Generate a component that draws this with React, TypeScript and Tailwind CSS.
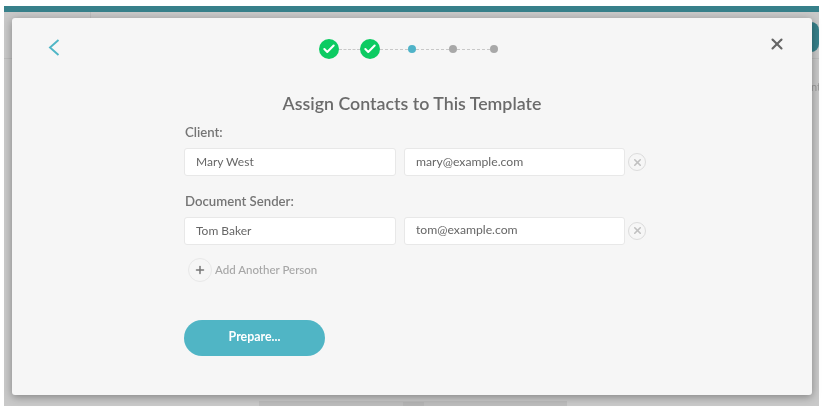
import React from 'react';
import { Check, Plus, X } from 'lucide-react';

const font = "font-['Lato','Open_Sans',sans-serif]";

const StepDone = () => (
  <div className="flex h-5 w-5 items-center justify-center rounded-full bg-[#0ccb62]">
    <Check className="h-[14px] w-[14px] text-white" strokeWidth={3.5} />
  </div>
);

const Dash: React.FC<{ w: string }> = ({ w }) => <div className={`${w} border-t border-dashed border-[#c8c8c8]`} />;

const Row: React.FC<{ label: string; name: string; email: string }> = ({ label, name, email }) => (
  <div>
    <div className="ml-px text-[13.2px] leading-4 font-semibold text-[#757575]">{label}</div>
    <div className="mt-[8px] flex items-center">
      <div className="flex h-[28px] w-[212px] items-center rounded-[3px] border border-[#e8e8e8] bg-white pl-[11px] text-[12px] text-[#666]">
        {name}
      </div>
      <div className="ml-2 flex h-[28px] w-[221px] items-center rounded-[3px] border border-[#e8e8e8] bg-white pl-[11px] text-[12.2px] text-[#666]">
        {email}
      </div>
      <div className="ml-[3px] flex h-[18px] w-[18px] items-center justify-center rounded-full border border-[#dcdcdc]">
        <X className="h-[11px] w-[11px] text-[#c0c0c0]" strokeWidth={3.5} />
      </div>
    </div>
  </div>
);

export default function App() {
  return (
    <div className={`h-[411px] w-[822px] overflow-hidden bg-white pt-1.5 pr-[3px] pb-[5px] pl-1 blur-[0.4px] ${font}`}>
      <div className="relative flex h-full flex-col bg-[#c9c9c9]">
        <div className="h-1.5 bg-[#37808a]" />
        {/* page behind the modal, only its edges show */}
        <div className="absolute top-[6px] left-[86px] h-1.5 w-px bg-[#bdbdbd]" />
        <div className="absolute top-[52px] left-0 h-px w-2 bg-[#bdbdbd]" />
        <div className="absolute top-[52px] right-0 h-px w-2 bg-[#bdbdbd]" />
        <div className="absolute top-[16px] right-0 h-[30px] w-2 rounded-r-full bg-[#37808a]" />
        <div className="absolute top-[73px] right-0 w-2 overflow-hidden text-[11px] text-[#9a9a9a]">nt</div>
        <div className="absolute bottom-0 left-[255px] h-[5px] w-[308px] bg-[#bcbcbc]" />
        <div className="absolute bottom-0 left-[399px] h-[4px] w-[21px] bg-[#b4b4b4]" />

        <div className="relative mt-1.5 ml-2 h-[377px] w-[800px] rounded-[3px] bg-[#f6f6f6] shadow-[0_2px_8px_rgba(0,0,0,0.35)]">
          <div className="flex items-start pt-4 pr-[26px] pl-[36px]">
            <svg viewBox="0 0 12 17" className="mt-[5px] h-[17px] w-3 text-[#4fb6c6]" fill="none" stroke="currentColor" strokeWidth="1.9">
              <path d="M10.5 1 L2 8.5 L10.5 16" />
            </svg>
            <div className="mt-[5px] ml-[259px] flex items-center">
              <StepDone />
              <Dash w="w-[21px]" />
              <StepDone />
              <Dash w="w-[28px]" />
              <div className="h-2 w-2 rounded-full bg-[#4fb3c8]" />
              <Dash w="w-[33px]" />
              <div className="h-2 w-2 rounded-full bg-[#a8a8a8]" />
              <Dash w="w-[33px]" />
              <div className="h-2 w-2 rounded-full bg-[#a8a8a8]" />
            </div>
            <X className="mt-px ml-auto h-[18px] w-[18px] text-[#666]" strokeWidth={2.8} />
          </div>

          <h1 className="mt-[32px] text-center text-[17.8px] leading-6 font-semibold text-[#6b6b6b]">
            Assign Contacts to This Template
          </h1>

          <div className="mt-[9px] ml-[172px] flex flex-col gap-[16.5px]">
            <Row label="Client:" name="Mary West" email="mary@example.com" />
            <Row label="Document Sender:" name="Tom Baker" email="tom@example.com" />
          </div>

          <div className="mt-[13px] ml-[176px] flex items-center gap-[3px]">
            <div className="flex h-6 w-6 items-center justify-center rounded-full border border-[#e8e8e8]">
              <Plus className="h-3 w-3 text-[#777]" strokeWidth={3} />
            </div>
            <span className="text-[11.5px] font-medium text-[#a6a6a6]">Add Another Person</span>
          </div>

          <button className="mt-[38px] ml-[172px] flex h-9 w-[141px] items-center justify-center rounded-full bg-[#50b5c5] text-[12.4px] font-bold text-white">
            Prepare...
          </button>
        </div>
      </div>
    </div>
  );
}
